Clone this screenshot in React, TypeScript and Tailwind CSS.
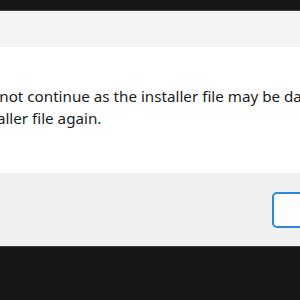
import React from "react";

const App = () => {
  return (
    <div className="w-[300px] h-[300px] overflow-hidden bg-[#161616] flex flex-col font-['Noto_Sans',sans-serif]">
      <div className="h-[10px] shrink-0 bg-[#171717]" />
      <div className="shrink-0 border-y border-[#3f3f3f] flex flex-col">
        {/* title area */}
        <div className="h-[36px] bg-[#f3f3f3]" />
        {/* body */}
        <div className="h-[126px] bg-white overflow-hidden">
          <div className="-ml-[71px] pt-[39px] text-[15.2px] leading-[21px] text-[#1b1b1b] whitespace-nowrap">
            <p>Setup cannot continue as the installer file may be damaged.</p>
            <p className="-ml-[110px] mt-[1px]">Please download the installer file again.</p>
          </div>
        </div>
        {/* footer */}
        <div className="h-[73px] bg-[#f0f0f0] flex items-center pl-[272px]">
          <button className="shrink-0 w-[90px] h-[36px] rounded-[5px] border-2 border-[#2f86de] bg-[#fdfdfd] text-[14px] text-[#1b1b1b]">
            OK
          </button>
        </div>
      </div>
    </div>
  );
};

export default App;
